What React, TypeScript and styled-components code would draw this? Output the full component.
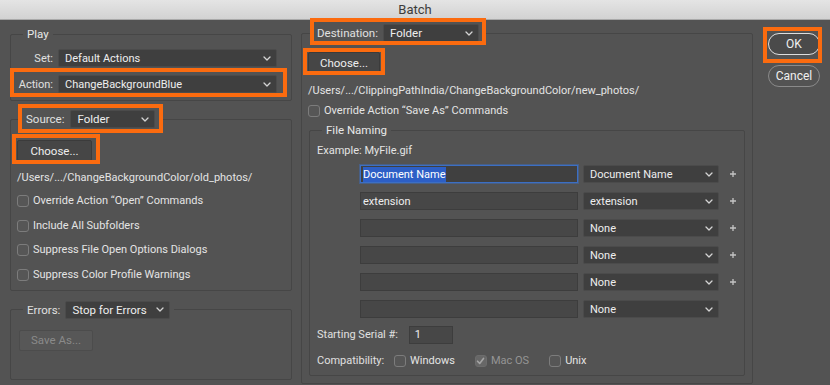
import * as React from 'react';
import styled, {createGlobalStyle} from 'styled-components';

const GlobalStyle = createGlobalStyle`
    html, body {
        margin: 0;
        padding: 0;
        background: #535353;
    }
    body {
        font-family: Roboto, "Liberation Sans", Arial, sans-serif;
        font-size: 11px;
        color: #e6e6e6;
    }
    * {
        box-sizing: border-box;
    }
`;

const ORANGE = '#fb6b0f';

const Window = styled.div`
    width: 830px;
    height: 385px;
    overflow: hidden;
    display: flex;
    flex-direction: column;
    background: #535353;
`;

const TitleBar = styled.div`
    height: 20px;
    flex: none;
    display: flex;
    align-items: center;
    justify-content: center;
    background: linear-gradient(#e4e4e4, #d2d2d2);
    border-bottom: 1px solid #a9a9a9;
    color: #3c3c3c;
    font-size: 13px;
`;

const Body = styled.div`
    display: flex;
    align-items: flex-start;
    gap: 9px;
    padding: 4px 0 0 10px;
`;

const Column = styled.div<{ $w?: number; $top?: number; $left?: number; $gap?: number }>`
    display: flex;
    flex-direction: column;
    flex: none;
    width: ${p => (p.$w ? `${p.$w}px` : 'auto')};
    padding-top: ${p => p.$top || 0}px;
    padding-left: ${p => p.$left || 0}px;
    gap: ${p => p.$gap || 0}px;
`;

const Group = styled.fieldset<{ $mt?: number; $ml?: number }>`
    margin: ${p => p.$mt || 0}px 0 0 ${p => p.$ml || 0}px;
    padding: 0;
    min-width: 0;
    border: 1px solid #464646;
    border-radius: 2px;
`;

const FileNaming = styled(Group)`
    align-self: stretch;
`;

const Legend = styled.legend<{ $indent: number }>`
    margin-left: ${p => p.$indent}px;
    padding: 0 4px;
    line-height: 14px;
    color: #e8e8e8;
    font-size: 11.5px;
`;

const GroupBody = styled.div<{ $pad: string; $gap?: number }>`
    display: flex;
    flex-direction: column;
    align-items: flex-start;
    padding: ${p => p.$pad};
    gap: ${p => p.$gap || 0}px;
`;

const Highlight = styled.div<{ $t: number; $r: number; $b: number; $l: number; $block?: boolean }>`
    position: relative;
    display: flex;
    align-items: center;
    align-self: ${p => (p.$block ? 'stretch' : 'flex-start')};
    width: ${p => (p.$block ? 'auto' : 'fit-content')};

    &::after {
        content: '';
        position: absolute;
        top: -${p => p.$t}px;
        right: -${p => p.$r}px;
        bottom: -${p => p.$b}px;
        left: -${p => p.$l}px;
        border: 4px solid ${ORANGE};
        pointer-events: none;
    }
`;

const Field = styled.div`
    flex: 1;
    display: grid;
    grid-template-columns: 36px 1fr;
    gap: 5px;
    align-items: center;
    align-self: stretch;
`;

const Label = styled.span<{ $right?: boolean; $w?: number }>`
    text-align: ${p => (p.$right ? 'right' : 'left')};
    width: ${p => (p.$w ? `${p.$w}px` : 'auto')};
    flex: none;
    color: #e0e0e0;
    white-space: nowrap;
`;

const InlineGroup = styled.div<{ $gap: number }>`
    display: flex;
    align-items: center;
    gap: ${p => p.$gap}px;
`;

const SelectBox = styled.div<{ $w?: number }>`
    height: 18px;
    width: ${p => (p.$w ? `${p.$w}px` : 'auto')};
    display: flex;
    align-items: center;
    justify-content: space-between;
    padding: 0 5px 0 6px;
    background: #3f3f3f;
    border: 1px solid #4b4b4b;
    border-radius: 2px;
    color: #eeeeee;
    white-space: nowrap;
`;

const Button = styled.div<{ $w: number; $disabled?: boolean }>`
    width: ${p => p.$w}px;
    height: 21px;
    display: flex;
    align-items: center;
    justify-content: center;
    border-radius: 2px;
    background: ${p => (p.$disabled ? '#575757' : '#464646')};
    border: 1px solid ${p => (p.$disabled ? '#4c4c4c' : '#3b3b3b')};
    color: ${p => (p.$disabled ? '#8a8a8a' : '#eeeeee')};
    font-size: 11.5px;
`;

const PillButton = styled.div<{ $default?: boolean }>`
    width: 52px;
    height: 22px;
    display: flex;
    align-items: center;
    justify-content: center;
    border-radius: 11px;
    background: ${p => (p.$default ? '#4a4a4a' : '#535353')};
    border: 1px solid ${p => (p.$default ? '#dedede' : '#8a8a8a')};
    color: #f0f0f0;
    font-size: 12px;
`;

const PathText = styled.div<{ $mt: number }>`
    margin-top: ${p => p.$mt}px;
    line-height: 14px;
    color: #e4e4e4;
    white-space: nowrap;
`;

const CheckList = styled.div<{ $mt: number }>`
    display: flex;
    flex-direction: column;
    gap: 10.6px;
    margin-top: ${p => p.$mt}px;
`;

const CheckRow = styled.label<{ $disabled?: boolean }>`
    display: flex;
    align-items: center;
    gap: 4px;
    height: 14px;
    line-height: 14px;
    color: ${p => (p.$disabled ? '#959595' : '#e4e4e4')};
    white-space: nowrap;
`;

const Box = styled.span<{ $disabled?: boolean }>`
    width: 12px;
    height: 12px;
    flex: none;
    display: flex;
    align-items: center;
    justify-content: center;
    border-radius: 3px;
    background: ${p => (p.$disabled ? '#676767' : '#565656')};
    border: 1px solid ${p => (p.$disabled ? '#6c6c6c' : '#7c7c7c')};
`;

const NameRows = styled.div`
    display: flex;
    flex-direction: column;
    gap: 9px;
    margin: 7px 0 0 43px;
`;

const NameRow = styled.div`
    display: grid;
    grid-template-columns: 218px 136px 8px;
    column-gap: 5px;
    align-items: center;

    & > :last-child {
        margin-left: 5px;
    }
`;

const TextInput = styled.div<{ $focus?: boolean; $w?: number }>`
    height: 18px;
    width: ${p => (p.$w ? `${p.$w}px` : 'auto')};
    display: flex;
    align-items: center;
    padding-left: 2px;
    background: ${p => (p.$focus ? '#404040' : '#474747')};
    border: 1px solid ${p => (p.$focus ? '#3c6fc4' : '#3d3d3d')};
    box-shadow: ${p => (p.$focus ? '0 0 0 1px rgba(60, 111, 196, 0.45)' : 'none')};
    color: #eeeeee;
    white-space: nowrap;
`;

const Selected = styled.span`
    background: #2d5fc6;
    color: #ffffff;
    line-height: 15px;
`;

const FormLine = styled.div<{ $mt: number }>`
    display: flex;
    align-items: center;
    margin-top: ${p => p.$mt}px;
    line-height: 14px;
`;

const Options = styled.div`
    display: flex;
    align-items: center;
    gap: 20px;
`;

const Chevron = () => (
    <svg width="8" height="5" viewBox="0 0 8 5">
        <path d="M1 1l3 3 3-3" fill="none" stroke="#d4d4d4" strokeWidth="1.3" strokeLinecap="round"
              strokeLinejoin="round"/>
    </svg>
);

const Plus = () => (
    <svg width="8" height="8" viewBox="0 0 8 8">
        <path d="M4 1v6M1 4h6" stroke="#c4c4c4" strokeWidth="1.3"/>
    </svg>
);

const Check = () => (
    <svg width="9" height="8" viewBox="0 0 9 8">
        <path d="M1.5 4.2l2.2 2.2 3.8-5" fill="none" stroke="#a4a4a4" strokeWidth="1.6" strokeLinecap="round"
              strokeLinejoin="round"/>
    </svg>
);

const Select = ({value, width}: { value: string; width?: number }) => (
    <SelectBox $w={width}>
        <span>{value}</span>
        <Chevron/>
    </SelectBox>
);

const Checkbox = ({label, checked, disabled}: { label: string; checked?: boolean; disabled?: boolean }) => (
    <CheckRow $disabled={disabled}>
        <Box $disabled={disabled}>{checked && <Check/>}</Box>
        {label}
    </CheckRow>
);

const namingRows = [
    {text: 'Document Name', option: 'Document Name', focus: true, plus: true},
    {text: 'extension', option: 'extension', plus: true},
    {text: '', option: 'None', plus: true},
    {text: '', option: 'None', plus: true},
    {text: '', option: 'None', plus: true},
    {text: '', option: 'None', plus: false},
];

const App = () => {
    return (
        <Window>
            <GlobalStyle/>
            <TitleBar>Batch</TitleBar>
            <Body>
                <Column $w={282} $top={3}>
                    <Group>
                        <Legend $indent={12}>Play</Legend>
                        <GroupBody $pad="8px 14px 7px 6px" $gap={8}>
                            <Field>
                                <Label $right>Set:</Label>
                                <Select value="Default Actions"/>
                            </Field>
                            <Highlight $block $t={7} $r={10} $b={4} $l={7}>
                                <Field>
                                    <Label $right>Action:</Label>
                                    <Select value="ChangeBackgroundBlue"/>
                                </Field>
                            </Highlight>
                        </GroupBody>
                    </Group>

                    <Group $mt={9}>
                        <Legend $indent={11}>
                            <Highlight $t={6} $r={8} $b={5} $l={8}>
                                <InlineGroup $gap={6}>
                                    <Label>Source:</Label>
                                    <Select value="Folder" width={85}/>
                                </InlineGroup>
                            </Highlight>
                        </Legend>
                        <GroupBody $pad="12px 14px 8px 6px">
                            <Highlight $t={6} $r={8} $b={3} $l={5}>
                                <Button $w={75}>Choose...</Button>
                            </Highlight>
                            <PathText $mt={10}>/Users/.../ChangeBackgroundColor/old_photos/</PathText>
                            <CheckList $mt={9}>
                                <Checkbox label="Override Action “Open” Commands"/>
                                <Checkbox label="Include All Subfolders"/>
                                <Checkbox label="Suppress File Open Options Dialogs"/>
                                <Checkbox label="Suppress Color Profile Warnings"/>
                            </CheckList>
                        </GroupBody>
                    </Group>

                    <Group $mt={10}>
                        <Legend $indent={12}>
                            <InlineGroup $gap={5}>
                                <Label>Errors:</Label>
                                <Select value="Stop for Errors" width={105}/>
                            </InlineGroup>
                        </Legend>
                        <GroupBody $pad="11px 14px 28px 8px">
                            <Button $w={74} $disabled>Save As...</Button>
                        </GroupBody>
                    </Group>
                </Column>

                <Column $w={452}>
                    <Group>
                        <Legend $indent={11}>
                            <Highlight $t={6} $r={7} $b={3} $l={7}>
                                <InlineGroup $gap={5}>
                                    <Label>Destination:</Label>
                                    <Select value="Folder" width={96}/>
                                </InlineGroup>
                            </Highlight>
                        </Legend>
                        <GroupBody $pad="10px 7px 7px 6px">
                            <Highlight $t={4} $r={5} $b={2} $l={5}>
                                <Button $w={72}>Choose...</Button>
                            </Highlight>
                            <PathText $mt={11}>/Users/.../ClippingPathIndia/ChangeBackgroundColor/new_photos/</PathText>
                            <CheckList $mt={6}>
                                <Checkbox label="Override Action “Save As” Commands"/>
                            </CheckList>
                            <FileNaming $mt={5} $ml={1}>
                                <Legend $indent={12}>File Naming</Legend>
                                <GroupBody $pad="7px 7px 7px 7px">
                                    <PathText $mt={0}>Example: MyFile.gif</PathText>
                                    <NameRows>
                                        {namingRows.map((row, i) => (
                                            <NameRow key={i}>
                                                <TextInput $focus={row.focus}>
                                                    {row.focus ? <Selected>{row.text}</Selected> : row.text}
                                                </TextInput>
                                                <Select value={row.option}/>
                                                <span>{row.plus && <Plus/>}</span>
                                            </NameRow>
                                        ))}
                                    </NameRows>
                                    <FormLine $mt={8}>
                                        <Label $w={92}>Starting Serial #:</Label>
                                        <TextInput $w={44}>&nbsp;1</TextInput>
                                    </FormLine>
                                    <FormLine $mt={10}>
                                        <Label $w={77}>Compatibility:</Label>
                                        <Options>
                                            <Checkbox label="Windows"/>
                                            <Checkbox label="Mac OS" checked disabled/>
                                            <Checkbox label="Unix"/>
                                        </Options>
                                    </FormLine>
                                </GroupBody>
                            </FileNaming>
                        </GroupBody>
                    </Group>
                </Column>

                <Column $top={9} $left={6} $gap={10}>
                    <Highlight $t={6} $r={2} $b={8} $l={5}>
                        <PillButton $default>OK</PillButton>
                    </Highlight>
                    <PillButton>Cancel</PillButton>
                </Column>
            </Body>
        </Window>
    );
};

export default App;
